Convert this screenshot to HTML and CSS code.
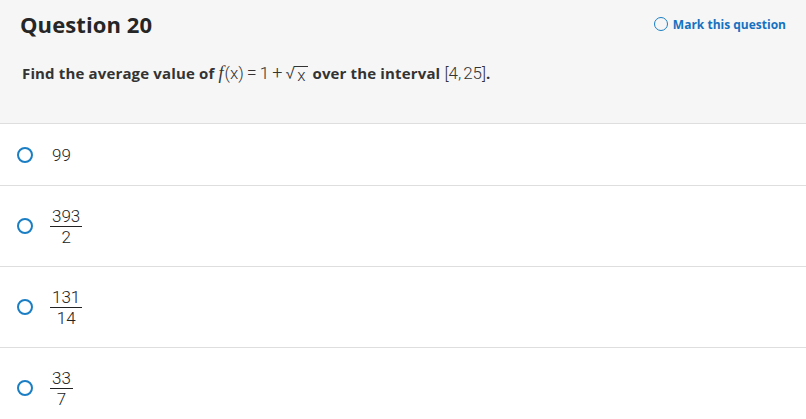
FILE: index.html
```html
<!DOCTYPE html>
<html>
<head>
<meta charset="utf-8">
<link rel="stylesheet" href="styles.css">
</head>
<body>
<div class="header">
  <div class="top">
    <h1 class="title">Question 20</h1>
    <a class="mark"><span class="ring small"></span>Mark this question</a>
  </div>
  <p class="prompt">Find the average value of <span class="math"><i class="fn">f</i>(<span class="var">x</span>)<span class="op">=</span>1<span class="op">+</span><span class="sqrt"><span class="rad">&#8730;</span><span class="under var">x</span></span></span> over the interval <span class="math">[4,<span class="sp"></span>25]</span>.</p>
</div>
<ul class="options">
  <li class="opt first"><span class="ring"></span><span class="val">99</span></li>
  <li class="opt"><span class="ring"></span><span class="frac"><span class="num">393</span><span class="den">2</span></span></li>
  <li class="opt"><span class="ring"></span><span class="frac"><span class="num">131</span><span class="den">14</span></span></li>
  <li class="opt"><span class="ring"></span><span class="frac"><span class="num">33</span><span class="den">7</span></span></li>
</ul>
</body>
</html>
```
FILE: styles.css
```css
* { box-sizing: border-box; }
html, body { margin: 0; padding: 0; background: #fff; }
body { font-family: "Open Sans", "Liberation Sans", sans-serif; color: #2b2b2b; width: 806px; height: 419px; overflow: hidden; }
.header { background: #f6f6f6; border-bottom: 1px solid #dedede; height: 124px; padding: 0 20px 0 20px; }
.top { display: flex; justify-content: space-between; align-items: center; height: 48px; padding-top: 0; }
.title { margin: 0; font-size: 22px; font-weight: 700; color: #262626; letter-spacing: 0.1px; }
.mark { display: flex; align-items: center; gap: 5px; color: #1571c0; font-weight: 700; font-size: 12px; letter-spacing: 0; }
.ring { display: inline-block; width: 16px; height: 16px; border: 2px solid #1a7ec4; border-radius: 50%; flex: none; }
.ring.small { width: 14px; height: 14px; border-width: 1.7px; }
.prompt { margin: 14px 0 0 2px; font-size: 15px; font-weight: 700; color: #333; letter-spacing: 0.15px; }
.math { font-family: "Roboto", "Liberation Sans", sans-serif; font-weight: 300; font-size: 17px; color: #333; letter-spacing: 0; }
.math .fn { font-family: "Liberation Serif", serif; font-style: italic; font-size: 18px; padding-right: 1px; }
.math .var { font-style: normal; }
.math .op { margin: 0 3px; font-size: 18px; }
.sp { display: inline-block; width: 2px; }
.sqrt { display: inline-flex; align-items: flex-end; }
.rad { font-size: 18px; }
.under { border-top: 1px solid #333; padding: 0 3px; line-height: 16px; margin-left: -1px; }
.options { list-style: none; margin: 0; padding: 0; }
.opt { display: flex; align-items: center; gap: 17px; height: 81px; padding-left: 17px; border-bottom: 1px solid #dedede; font-family: "Roboto", "Liberation Sans", sans-serif; font-weight: 300; font-size: 17px; color: #222; }
.opt.first { height: 62px; }
.val { padding-left: 2px; }
.frac { display: inline-flex; flex-direction: column; align-items: center; line-height: 18px; }
.num { border-bottom: 1px solid #222; padding: 0 2px 1px; }
.den { padding-top: 1px; }
```
